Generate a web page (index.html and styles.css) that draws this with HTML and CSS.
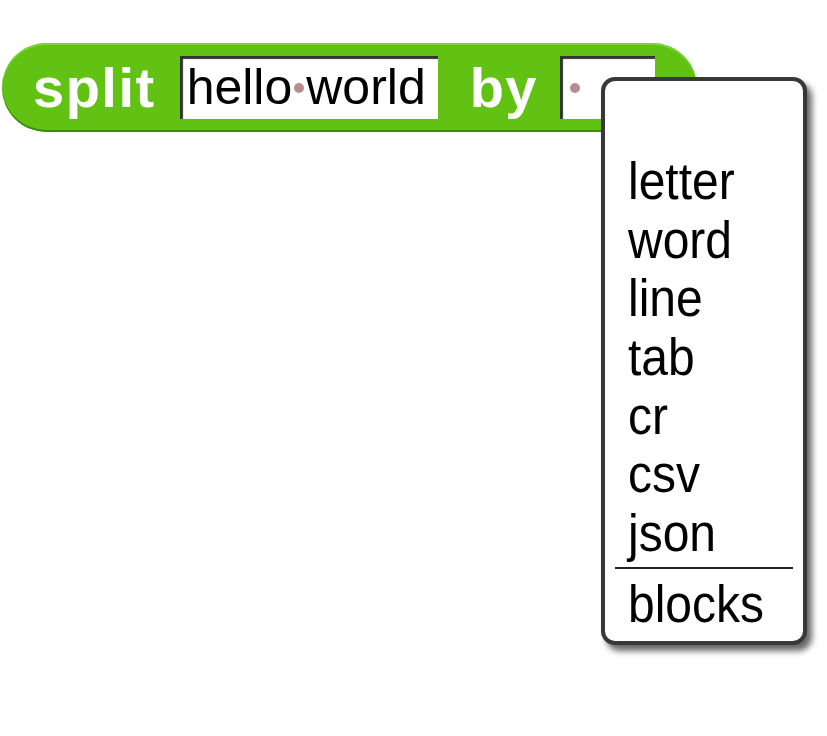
FILE: index.html
```html
<!DOCTYPE html>
<html>
<head>
<meta charset="utf-8">
<link rel="stylesheet" href="styles.css">
</head>
<body>
<div class="stage">
  <div class="block">
    <span class="label label-split">split</span>
    <span class="slot slot-wide">hello<span class="dot"></span>world</span>
    <span class="label label-by">by</span>
    <span class="slot slot-narrow"><span class="dot"></span></span>
  </div>
  <div class="menu">
    <div class="item"><span>letter</span></div>
    <div class="item"><span>word</span></div>
    <div class="item"><span>line</span></div>
    <div class="item"><span>tab</span></div>
    <div class="item"><span>cr</span></div>
    <div class="item"><span>csv</span></div>
    <div class="item"><span>json</span></div>
    <div class="sep"></div>
    <div class="item"><span>blocks</span></div>
  </div>
</div>
</body>
</html>
```
FILE: styles.css
```css
html, body {
  margin: 0;
  padding: 0;
  background: #ffffff;
}
.stage {
  position: relative;
  width: 827px;
  height: 736px;
  overflow: hidden;
  font-family: "Liberation Sans", Arial, sans-serif;
}
.block {
  display: flex;
  align-items: center;
  box-sizing: border-box;
  margin: 43px 0 0 2px;
  width: 695px;
  height: 89px;
  padding-left: 31px;
  border-radius: 45px;
  background: #62c213;
  box-shadow: inset 0 -2px 0 #3f8a10, inset 0 2px 0 #7ad43a;
}
.label {
  color: #ffffff;
  font-weight: bold;
  font-size: 56px;
  letter-spacing: 1.5px;
  line-height: 89px;
}
.label-split { margin-right: 24px; }
.label-by { margin-left: 32px; margin-right: 22px; }
.slot {
  display: flex;
  align-items: center;
  box-sizing: border-box;
  flex: none;
  height: 63px;
  background: #ffffff;
  box-shadow: inset 3px 3px 1px rgba(0,0,0,0.8);
  color: #000000;
  font-size: 50px;
  line-height: 63px;
}
.slot-wide {
  width: 258px;
  padding-left: 7px;
}
.slot-narrow {
  width: 95px;
  padding-left: 8px;
}
.dot {
  display: inline-block;
  width: 10px;
  height: 10px;
  border-radius: 50%;
  background: #b68e8e;
  margin: 0 2px;
}
.menu {
  position: absolute;
  left: 601px;
  top: 77px;
  width: 206px;
  height: 568px;
  box-sizing: border-box;
  border: 4px solid #383838;
  border-radius: 14px;
  background: #ffffff;
  box-shadow: 5px 6px 6px rgba(0,0,0,0.6);
  padding: 73px 0 0 0;
  font-family: "Liberation Sans", Arial, sans-serif;
}
.item {
  font-size: 48px;
  line-height: 58.7px;
  height: 58.7px;
  padding-left: 23px;
  color: #000000;
}
.item span {
  display: inline-block;
  transform: scaleY(1.08);
  transform-origin: 50% 80%;
}
.sep {
  height: 2px;
  background: #222222;
  margin: 2px 10px 8px 10px;
}
```
